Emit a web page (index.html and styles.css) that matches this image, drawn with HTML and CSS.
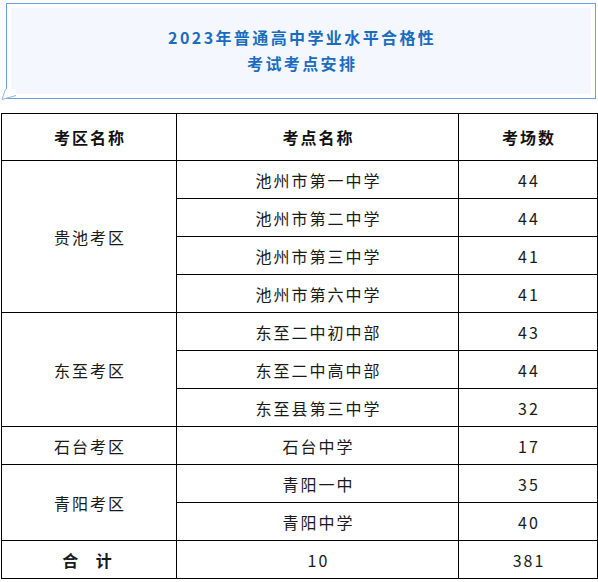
FILE: index.html
```html
<!DOCTYPE html>
<html lang="zh-CN">
<head>
<meta charset="utf-8">
<title>2023年普通高中学业水平合格性考试考点安排</title>
<link rel="stylesheet" href="styles.css">
</head>
<body>
<div class="banner">
  <div class="banner-inner">
    <p class="title">2023年普通高中学业水平合格性</p>
    <p class="title">考试考点安排</p>
  </div>
  <svg class="tail" width="20" height="14" viewBox="0 0 20 14">
    <polygon points="4.5,0 1,10.5 15,6.5 15,0" fill="#ffffff"/>
    <polyline points="4.5,0 1,10.5 15,6.5" fill="none" stroke="#8fb6e8" stroke-width="1"/>
  </svg>
</div>
<table class="exam">
  <colgroup>
    <col class="c1"><col class="c2"><col class="c3">
  </colgroup>
  <thead>
    <tr><th>考区名称</th><th>考点名称</th><th>考场数</th></tr>
  </thead>
  <tbody>
    <tr><td rowspan="4">贵池考区</td><td>池州市第一中学</td><td>44</td></tr>
    <tr><td>池州市第二中学</td><td>44</td></tr>
    <tr><td>池州市第三中学</td><td>41</td></tr>
    <tr><td>池州市第六中学</td><td>41</td></tr>
    <tr><td rowspan="3">东至考区</td><td>东至二中初中部</td><td>43</td></tr>
    <tr><td>东至二中高中部</td><td>44</td></tr>
    <tr><td>东至县第三中学</td><td>32</td></tr>
    <tr><td>石台考区</td><td>石台中学</td><td>17</td></tr>
    <tr><td rowspan="2">青阳考区</td><td>青阳一中</td><td>35</td></tr>
    <tr><td>青阳中学</td><td>40</td></tr>
    <tr class="total"><td class="sum">合 计</td><td>10</td><td>381</td></tr>
  </tbody>
</table>
</body>
</html>
```
FILE: styles.css
```css
html, body {
  margin: 0;
  padding: 0;
  background: #ffffff;
}
body {
  font-family: "Noto Sans CJK SC", "Noto Sans", sans-serif;
  color: #111111;
  width: 598px;
}
.banner {
  position: relative;
  margin: 3px 2px 0 6px;
  border: 1px solid #6a9fe2;
  padding: 4px;
  height: 86px;
}
.banner-inner {
  background: #f4f8fe;
  height: 86px;
  display: flex;
  flex-direction: column;
  justify-content: center;
  align-items: center;
}
.title {
  margin: 0;
  font-size: 16px;
  font-weight: 700;
  line-height: 26px;
  letter-spacing: 2.4px;
  padding-left: 2.4px;
  color: #1a6cbf;
}
.title:first-child {
  margin-top: -3px;
}
.tail {
  position: absolute;
  left: -6px;
  bottom: -5px;
  display: block;
}
.exam {
  margin: 14px 0 0 1px;
  width: 596px;
  border-collapse: collapse;
  table-layout: fixed;
}
.c1 { width: 175px; }
.c2 { width: 282px; }
.c3 { width: 139px; }
.exam th, .exam td {
  border: 1px solid #000000;
  text-align: center;
  vertical-align: middle;
  padding: 0 0 0 2px;
  font-size: 16px;
  letter-spacing: 2px;
  line-height: 20px;
}
.exam th {
  height: 46px;
  font-weight: 700;
  color: #111111;
}
.exam td {
  height: 37px;
  color: #1a1a1a;
}
.exam .sum {
  font-weight: 700;
  word-spacing: 10px;
  padding-right: 4px;
}
```
